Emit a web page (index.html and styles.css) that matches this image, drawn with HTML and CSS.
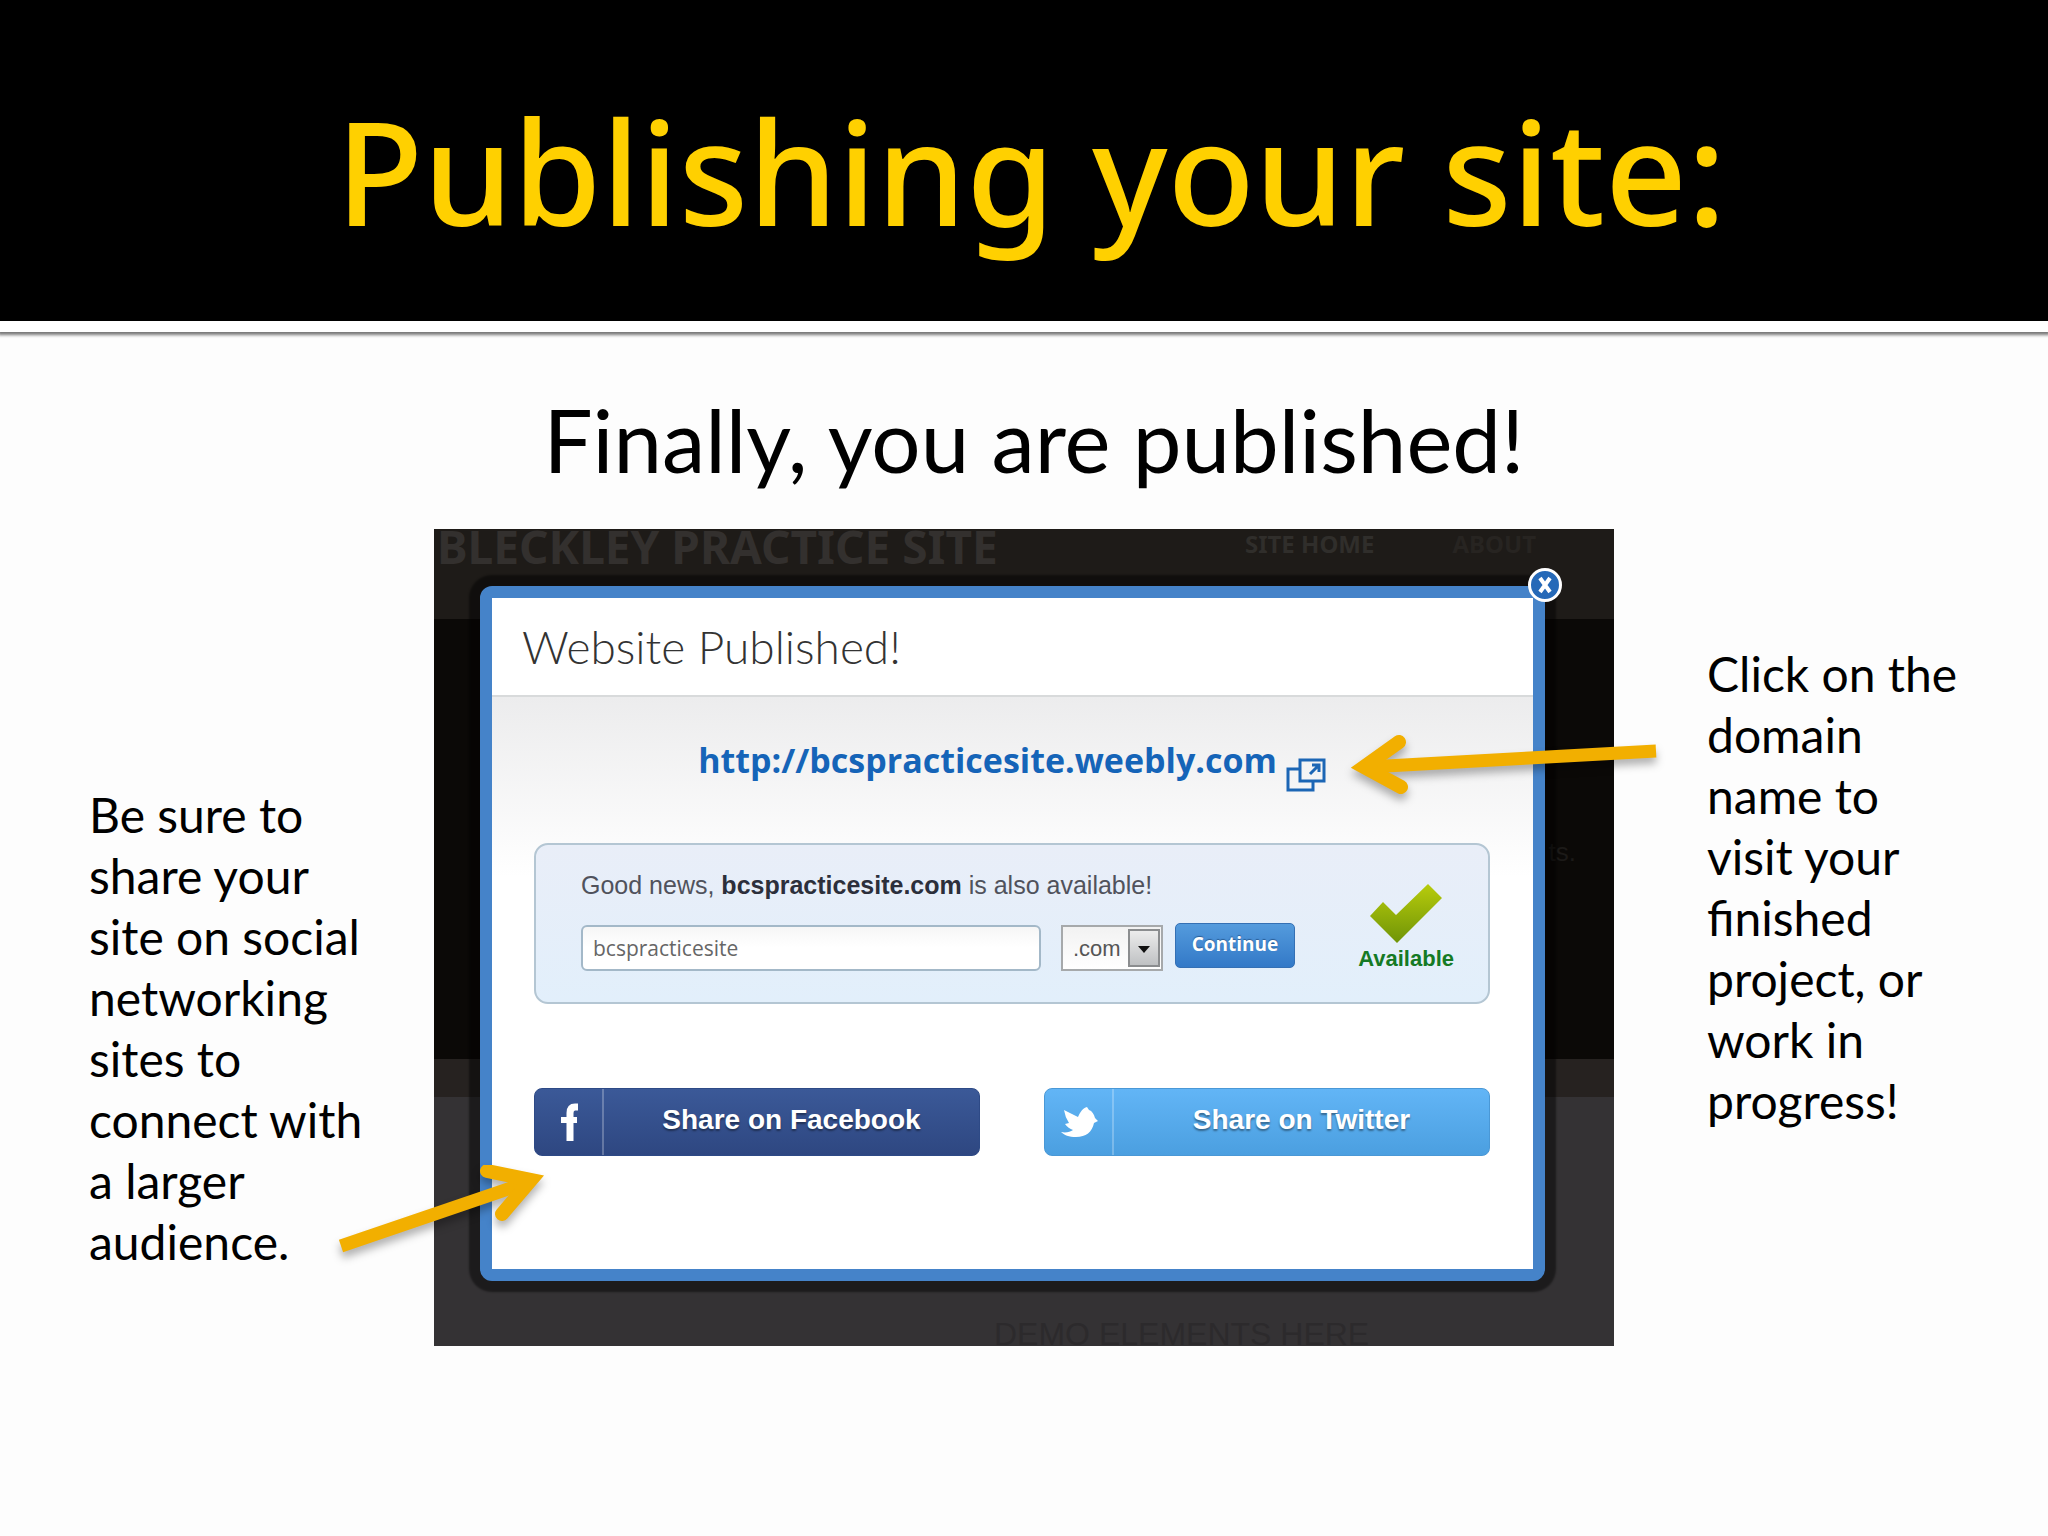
FILE: index.html
```html
<!DOCTYPE html>
<html lang="en">
<head>
    <meta charset="UTF-8">
    <meta name="viewport" content="width=device-width, initial-scale=1.0">
    <title>Publishing your site</title>
    <link rel="stylesheet" href="styles.css">
</head>
<body>
    <header class="banner">
        <h1>Publishing your site:</h1>
    </header>
    <main>
        <h2 class="subtitle">Finally, you are published!</h2>
        <div class="stage">
            <p class="note note-left">Be sure to share your site on social networking sites to connect with a larger audience.</p>
            <div class="shot">
                <div class="site-nav">
                    <span class="site-name">BLECKLEY PRACTICE SITE</span>
                    <span class="nav-item">SITE HOME</span>
                    <span class="nav-item faint">ABOUT</span>
                </div>
                <span class="site-text">ts.</span>
                <span class="site-footer">DEMO ELEMENTS HERE</span>

                <section class="modal">
                    <button class="close" aria-label="Close">
                        <svg viewBox="0 0 14 18" width="14" height="18"><path d="M2 2L12 16M12 2L2 16" stroke="#fff" stroke-width="4"/></svg>
                    </button>
                    <h3>Website Published!</h3>
                    <div class="modal-body">
                        <div class="domain">
                            <a href="#">http://bcspracticesite.weebly.com</a>
                            <svg class="popup-icon" viewBox="0 0 40 34" width="40" height="34" fill="none" stroke="#1c66b5" stroke-width="3">
                                <path d="M13 11H2V32H27V24"/>
                                <rect x="14" y="2" width="24" height="21"/>
                                <path d="M24 16L32 8M26 7H33V14"/>
                            </svg>
                        </div>
                        <form class="offer">
                            <div class="offer-main">
                                <label for="domain-name">Good news, <b>bcspracticesite.com</b> is also available!</label>
                                <div class="fields">
                                    <input type="text" id="domain-name" value="bcspracticesite">
                                    <div class="tld">
                                        <select aria-label="Extension">
                                            <option>.com</option>
                                        </select>
                                        <span class="tld-arrow"></span>
                                    </div>
                                    <button type="button" class="continue">Continue</button>
                                </div>
                            </div>
                            <div class="available">
                                <svg viewBox="0 0 72 60" width="72" height="60">
                                    <defs>
                                        <linearGradient id="tick" x1="0" y1="0" x2="0" y2="1">
                                            <stop offset="0" stop-color="#b8cc0c"/>
                                            <stop offset="1" stop-color="#6f9407"/>
                                        </linearGradient>
                                    </defs>
                                    <path d="M0 32L13 18L26 31L58 0L72 14L27 59Z" fill="url(#tick)"/>
                                </svg>
                                <span>Available</span>
                            </div>
                        </form>
                        <div class="share">
                            <button class="share-btn facebook">
                                <span class="share-icon">
                                    <svg viewBox="0 0 20 38" width="20" height="38" fill="none" stroke="#fff" stroke-width="7"><path d="M19 4H16Q11 4 11 10V38"/><path d="M2 17H18" stroke-width="6"/></svg>
                                </span>
                                <span class="share-label">Share on Facebook</span>
                            </button>
                            <button class="share-btn twitter">
                                <span class="share-icon">
                                    <svg viewBox="0 0 38 32" width="38" height="32"><path fill="#fff" d="M4 4L18 11C20 6 23 2 27 1L29 4C32 5 34 8 35 12L38 15L34 17C32 26 26 31 16 31C9 31 4 29 1 26C6 27 10 26 13 24C10 23 7 21 5 18L9 17Q5 11 4 4Z"/></svg>
                                </span>
                                <span class="share-label">Share on Twitter</span>
                            </button>
                        </div>
                    </div>
                </section>

                <!-- pointers from the side notes -->
                <svg class="arrow arrow-left" viewBox="0 0 220 100" width="220" height="100">
                    <path d="M8 81L190 19"/>
                    <path class="head" d="M154 6L198 15L169 49"/>
                </svg>
                <svg class="arrow arrow-right" viewBox="0 0 320 70" width="320" height="70">
                    <path d="M24 36L312 20"/>
                    <path class="head" d="M55 11L20 36L57 56"/>
                </svg>
            </div>
            <p class="note note-right">Click on the domain name to visit your finished project, or work in progress!</p>
        </div>
    </main>
</body>
</html>
```

FILE: styles.css
```css
* {
    box-sizing: border-box;
}
body {
    margin: 0;
    background-color: #fdfdfd;
    color: #000;
    font-family: Lato, "Open Sans", sans-serif;
}
h1, h2, h3, p {
    margin: 0;
    font-weight: normal;
}
.banner {
    height: 332px;
    padding: 70px 0 0 14px;
    background-color: #000;
    border-bottom: 11px solid #fff;
    box-shadow: 0 1px 3px 2px #777;
    text-align: center;
}
.banner h1 {
    font-family: "Noto Sans", sans-serif;
    font-weight: 500;
    font-size: 143px;
    line-height: 202px;
    color: #ffd000;
}
.subtitle {
    padding: 58px 0 39px 20px;
    font-size: 87px;
    line-height: 100px;
    text-align: center;
}
.stage {
    display: flex;
    align-items: flex-start;
}
.note {
    flex: 0 0 434px;
    font-size: 48px;
    line-height: 61px;
}
.note-left {
    padding: 255px 55px 0 89px;
}
.note-right {
    padding: 114px 86px 0 93px;
}

/* screenshot of the editor */
.shot {
    position: relative;
    flex: 1;
    height: 817px;
    padding: 57px 69px 65px 46px;
    background: linear-gradient(#1e1b18 0 90px, #0b0907 90px 530px, #262220 530px 568px, #343234 568px);
    font-family: "Liberation Sans", Arial, sans-serif;
}
.site-nav {
    position: absolute;
    top: 0;
    left: 3px;
    right: 78px;
    display: flex;
    font-family: "Noto Sans", sans-serif;
    font-weight: bold;
    line-height: 34px;
    color: #33302e;
}
.site-name {
    flex: 1;
    font-size: 46px;
}
.nav-item {
    margin-left: 78px;
    font-size: 24px;
    line-height: 30px;
    color: #302e2b;
}
.nav-item.faint {
    color: #272421;
}
.site-text {
    position: absolute;
    top: 308px;
    right: 38px;
    font-size: 26px;
    color: #1c1a18;
}
.site-footer {
    position: absolute;
    left: 560px;
    bottom: 0;
    font-size: 32px;
    line-height: 24px;
    color: #2c2a2c;
}
.modal {
    position: relative;
    height: 695px;
    border: 12px solid #4583c9;
    border-radius: 12px;
    background-color: #fff;
    box-shadow: 0 0 2px 11px rgba(0, 0, 0, 0.45);
}
.close {
    position: absolute;
    top: -30px;
    right: -29px;
    width: 34px;
    height: 34px;
    padding: 0;
    display: flex;
    align-items: center;
    justify-content: center;
    border: 3px solid #fff;
    border-radius: 50%;
    background-color: #2569b8;
}
.modal h3 {
    height: 99px;
    padding-left: 30px;
    border-bottom: 2px solid #d8dadb;
    font-family: Lato, sans-serif;
    font-weight: 300;
    font-size: 46px;
    line-height: 98px;
    color: #333;
}
.modal-body {
    padding: 40px 43px 0 42px;
    background: linear-gradient(#ececed, #fff 180px);
}
.domain {
    display: flex;
    justify-content: center;
    gap: 9px;
    height: 106px;
}
.domain a {
    font-family: "Open Sans", sans-serif;
    font-weight: bold;
    font-size: 34px;
    line-height: 46px;
    color: #1564b8;
    text-decoration: none;
}
.popup-icon {
    margin-top: 21px;
}
.offer {
    display: flex;
    height: 161px;
    padding: 26px 34px 0 45px;
    border: 2px solid #b4c6d3;
    border-radius: 14px;
    background: linear-gradient(#e9eef8, #e2effb);
}
.offer-main {
    flex: 1;
}
.offer label {
    display: block;
    font-size: 25px;
    line-height: 28px;
    color: #50525c;
}
.offer b {
    color: #2c2f3b;
}
.fields {
    display: flex;
    gap: 12px;
    margin-top: 26px;
}
.fields input {
    width: 460px;
    height: 46px;
    margin-right: 8px;
    padding: 0 10px;
    border: 2px solid #a3b8c8;
    border-radius: 6px;
    background: linear-gradient(#f6f6f6, #fff 20px);
    font-family: "Open Sans", sans-serif;
    font-size: 21px;
    color: #666;
}
.tld {
    position: relative;
    width: 102px;
    height: 46px;
}
.tld select {
    width: 100%;
    height: 100%;
    padding: 0 0 0 10px;
    appearance: none;
    border: 2px solid #a6a9ab;
    border-radius: 0;
    background: linear-gradient(#f2f2f2, #fff);
    font-family: inherit;
    font-size: 22px;
    color: #555;
}
.tld-arrow {
    position: absolute;
    top: 4px;
    right: 3px;
    width: 32px;
    height: 38px;
    border: 2px solid #8b8d8f;
    background: linear-gradient(#ececec, #bfc1c3);
    pointer-events: none;
}
.tld-arrow::after {
    content: "";
    position: absolute;
    top: 15px;
    left: 8px;
    border: 6px solid transparent;
    border-top: 7px solid #111;
}
.continue {
    width: 120px;
    height: 45px;
    margin-top: -2px;
    padding: 0 0 4px;
    border: 1px solid #3470b4;
    border-radius: 5px;
    background: linear-gradient(#549bdd, #3379c7);
    font-family: "Open Sans", sans-serif;
    font-weight: bold;
    font-size: 19px;
    color: #fff;
    text-shadow: 0 -1px 1px #2a5d96;
}
.available {
    display: flex;
    flex-direction: column;
    align-items: center;
    padding-top: 13px;
    font-weight: bold;
    font-size: 22px;
    line-height: 30px;
    color: #157a24;
}
.share {
    display: flex;
    gap: 64px;
    margin-top: 84px;
}
.share-btn {
    flex: 1;
    display: flex;
    height: 68px;
    padding: 0;
    border: 1px solid;
    border-radius: 8px;
    font-family: inherit;
    font-weight: bold;
    font-size: 28px;
    line-height: 62px;
    color: #fff;
    text-shadow: 0 2px 2px rgba(0, 0, 0, 0.4);
}
.facebook {
    border-color: #2e4a86;
    background: linear-gradient(#3b5998, #2e4781);
}
.twitter {
    border-color: #4a98d6;
    background: linear-gradient(#62b5f6, #4b9fe0);
}
.share-icon {
    flex: 0 0 69px;
    height: 66px;
    display: flex;
    align-items: center;
    justify-content: center;
    border-right: 2px solid rgba(255, 255, 255, 0.25);
}
.share-label {
    flex: 1;
}
.arrow {
    position: absolute;
    fill: none;
    stroke: #f2af00;
    stroke-width: 13;
    filter: drop-shadow(0 6px 4px rgba(0, 0, 0, 0.3));
}
.head {
    stroke-width: 14;
    stroke-linecap: round;
    stroke-linejoin: miter;
}
.arrow-left {
    left: -101px;
    top: 636px;
}
.arrow-right {
    left: 910px;
    top: 202px;
}
```
